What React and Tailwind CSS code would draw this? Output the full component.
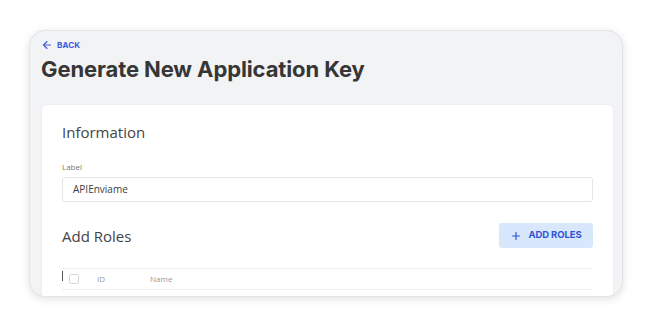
import { ArrowLeft, Plus } from 'lucide-react';

const grotesk = { fontFamily: 'Inter, "Liberation Sans", sans-serif' };

export default function App() {
  return (
    <div className="w-[650px] h-[329px] bg-white pt-[30px] pl-[29px]" style={{ fontFamily: '"Open Sans", "Liberation Sans", sans-serif' }}>
      <div className="w-[594px] h-[267px] rounded-[16px] bg-[#f2f3f5] border border-[#e3e4e7] shadow-[0_2px_8px_rgba(0,0,0,0.12)] overflow-hidden pl-[11px] pr-[8px]">
        <div className="mt-[8px] flex items-center gap-[4px] text-[#3b5bdb]" style={grotesk}>
          <ArrowLeft className="w-[12px] h-[12px]" strokeWidth={2.2} />
          <span className="text-[8px] font-bold tracking-[0.02em]">BACK</span>
        </div>
        <h1 className="mt-[4px] text-[22px] leading-[28px] font-bold text-[#363636] tracking-[-0.005em]" style={grotesk}>
          Generate New Application Key
        </h1>
        <div className="mt-[21px] bg-white rounded-t-[6px] border border-[#eceef1] h-[200px] px-[20px] pt-[16px]">
          <h2 className="text-[15px] leading-[22px] text-[#444444]">Information</h2>
          <div className="mt-[18px] text-[8px] leading-[12px] text-[#777777]">Label</div>
          <div className="mt-[4px] h-[25px] border border-[#e4e6ea] rounded-[3px] flex items-center px-[10px] text-[10px] text-[#3c3c3c]">
            APIEnviame
          </div>
          <div className="mt-[21px] flex items-center justify-between">
            <h2 className="text-[15px] leading-[22px] text-[#444444]">Add Roles</h2>
            <button className="w-[94px] h-[25px] rounded-[3px] bg-[#d9e7fd] flex items-center justify-center gap-[6px] text-[#2f55d4]" style={grotesk}>
              <Plus className="w-[12px] h-[12px]" strokeWidth={2.4} />
              <span className="text-[9.5px] font-bold tracking-[-0.01em]">ADD ROLES</span>
            </button>
          </div>
          <div className="mt-[20px] border-t border-b border-[#eeeff2] h-[22px] flex items-center text-[8px] text-[#9a9a9a]">
            <div className="w-[1px] h-[10px] bg-[#555] -mt-[6px]" />
            <div className="ml-[6px] w-[10px] h-[10px] border border-[#d6d8dc] rounded-[2px]" />
            <span className="ml-[18px]">ID</span>
            <span className="ml-[45px]">Name</span>
          </div>
        </div>
      </div>
    </div>
  );
}
